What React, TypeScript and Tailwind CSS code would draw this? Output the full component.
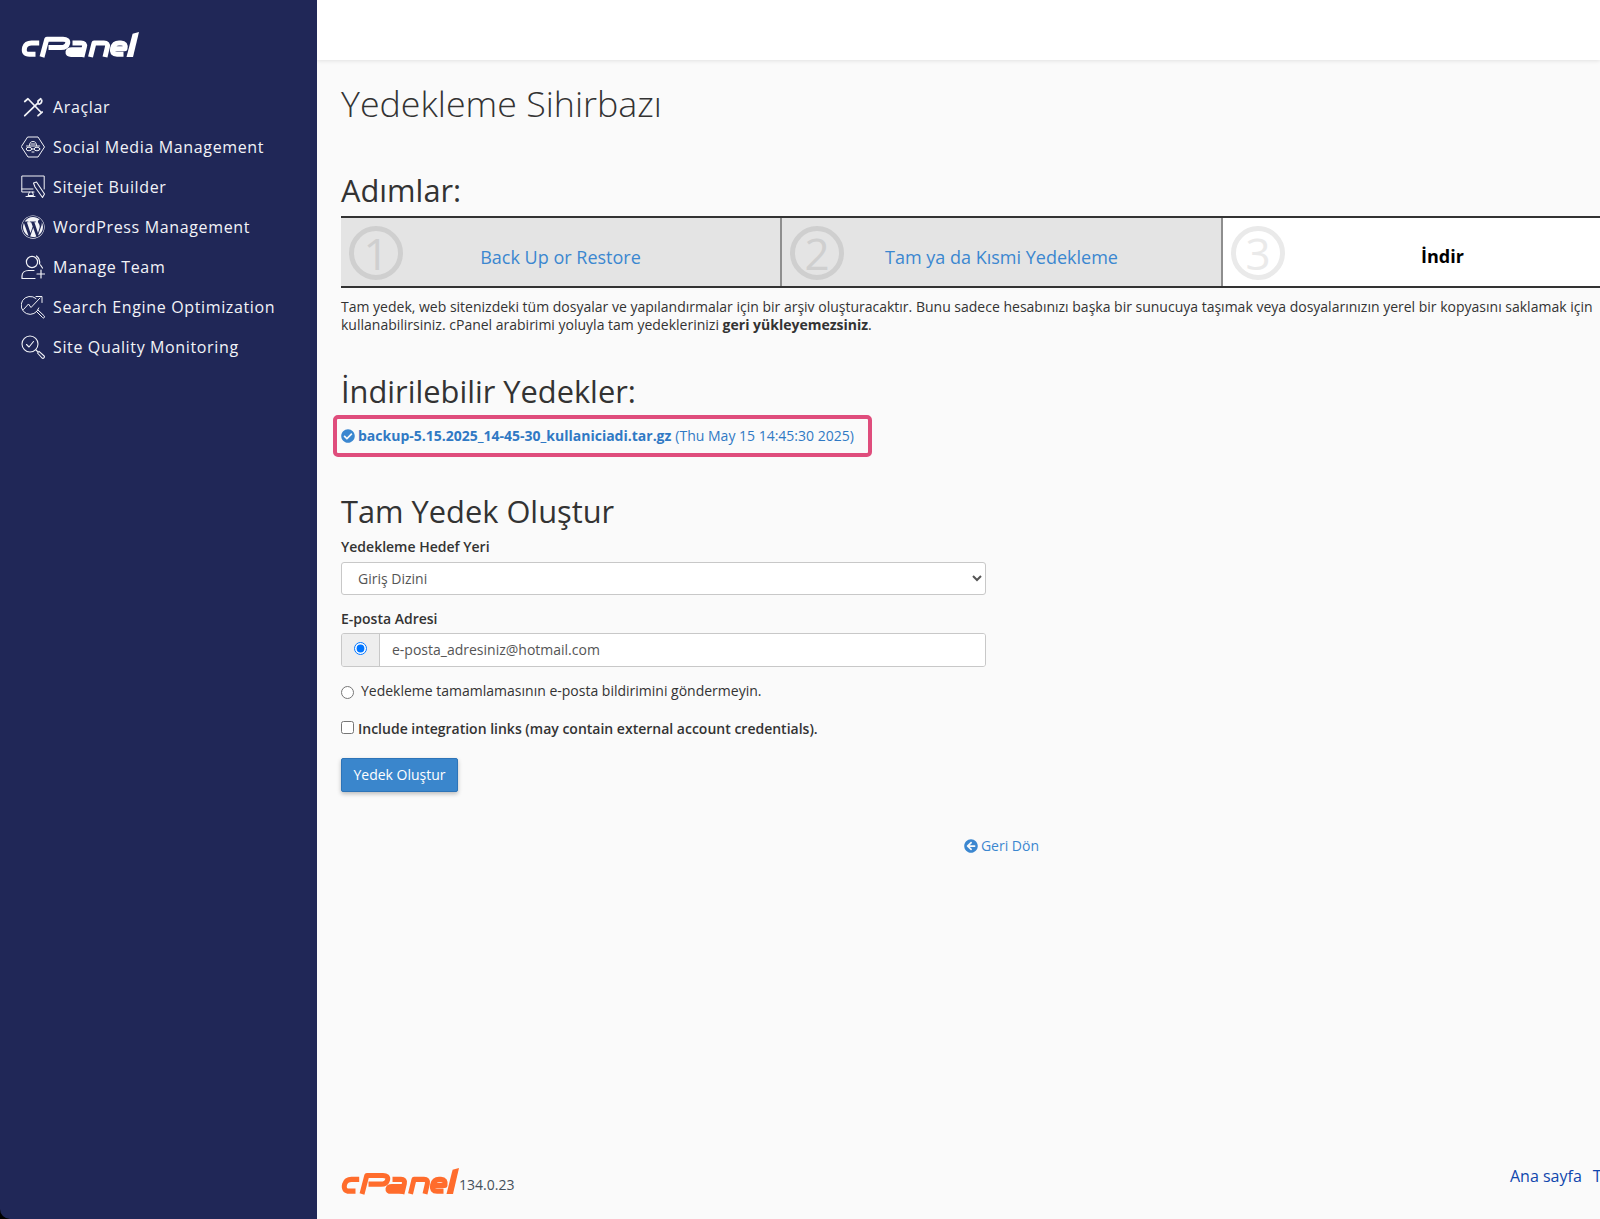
import React from "react";
import { FaWordpress, FaArrowCircleLeft, FaCheckCircle } from "react-icons/fa";

function Logo({ color, h = 26 }: { color: string; h?: number }) {
  return (
    <svg viewBox="0 0 118 26" width="118" height={h} preserveAspectRatio="none" fill="none" stroke={color} strokeWidth="5" strokeLinecap="butt" strokeLinejoin="round" role="img" aria-label="cPanel">
      <path d="M18.2 11H10.5Q5 11 3.6 15.6Q2 22.3 8.4 22.3H14.5" />
      <path d="M21 25L25.8 7.2H42Q47.6 7.2 46.6 11.4Q45.6 15.6 40 15.6H27.5" />
      <path d="M51.5 11H60Q64.4 11 63.4 14.8L60.9 25" />
      <path d="M61.8 17.8H51Q47.5 17.8 47 20Q46.6 22.4 50 22.4H61" />
      <path d="M69.5 25L73 11H83Q87.4 11 86.4 15L84 25" />
      <path d="M92.5 16.8H104Q105.2 11 100 11H98Q92.8 11 91.6 16.4Q90.2 22.3 96 22.3H102.5" />
      <path d="M105.5 25H112L118 0L111.6 1.8Z" fill={color} stroke="none" />
    </svg>
  );
}

const sw = { fill: "none", stroke: "currentColor", strokeWidth: 1.3, strokeLinecap: "round" as const, strokeLinejoin: "round" as const };

const ToolsIcon = () => (
  <svg viewBox="0 0 24 24" width="22" height="22" {...sw} strokeWidth={1.9}>
    <path d="M3 6L6.5 3L21 18M17.5 21.5L22 17.5" />
    <path d="M20.5 3L17.5 5.5V7.5L3 21.5" />
    <path d="M21.5 4.5C22 7 20 9.5 17.5 8.5" />
  </svg>
);
const HexIcon = () => (
  <svg viewBox="0 0 24 24" width="24" height="24" {...sw} strokeWidth={1}>
    <path d="M7 2H17L23.5 12L17 22H7L0.5 12Z" />
    <path d="M8.5 10.5C8.5 7.5 10 6.5 12 6.5C14 6.5 15.5 7.5 15.5 10.5M5.5 11H18.5" />
    <ellipse cx="8" cy="14" rx="2.8" ry="1.8" />
    <ellipse cx="16" cy="14" rx="2.8" ry="1.8" />
    <path d="M10.8 14H13.2M10 9H14M11 17H13" />
  </svg>
);
const MonitorIcon = () => (
  <svg viewBox="0 0 24 24" width="24" height="24" {...sw} strokeWidth={1}>
    <path d="M13 17H0.8V1H23.2V14" />
    <path d="M0.8 14H12" />
    <path d="M8.5 17L7 20.5H12.5L11.5 17M5 21.5H14" />
    <path d="M12.5 8L15.5 7L23.5 19L21.5 22.5L14 12Z" strokeWidth={1.1} />
  </svg>
);
const TeamIcon = () => (
  <svg viewBox="0 0 24 24" width="24" height="24" {...sw} strokeWidth={1.2}>
    <circle cx="11" cy="7" r="5.6" />
    <path d="M15.5 1C18 3 19 6 18.5 9M19.5 10L21.5 13" />
    <path d="M1 23.5H14M1 23.5V21C1 17.5 4 15.5 7.5 15.5H13" />
    <path d="M20 15V23M16 19H24" />
  </svg>
);
const SeoIcon = () => (
  <svg viewBox="0 0 24 24" width="24" height="24" {...sw} strokeWidth={1}>
    <path d="M15 3.5A9 9 0 1 0 17.8 13" />
    <path d="M2.5 14.5L7.5 9L10 12.5L19 3M15 1.5H21V7.5" />
    <path d="M15.5 16.5L21.5 22.5C22.5 23.8 24 22.5 23.3 21L17 15" />
  </svg>
);
const QualityIcon = () => (
  <svg viewBox="0 0 24 24" width="24" height="24" {...sw} strokeWidth={1.1}>
    <circle cx="9" cy="9" r="8" />
    <path d="M5.5 9.5L8 12L12.5 6.5" />
    <path d="M15 15L16.5 16.5" />
    <path d="M16.5 18L18 16.3L23.2 21C24 22.2 22.4 24 21 23Z" />
  </svg>
);

const nav: [React.ReactNode, string][] = [
  [<ToolsIcon />, "Araçlar"],
  [<HexIcon />, "Social Media Management"],
  [<MonitorIcon />, "Sitejet Builder"],
  [<FaWordpress size={24} />, "WordPress Management"],
  [<TeamIcon />, "Manage Team"],
  [<SeoIcon />, "Search Engine Optimization"],
  [<QualityIcon />, "Site Quality Monitoring"],
];

function Step({ n, title, active, last }: { n: string; title: string; active?: boolean; last?: boolean }) {
  return (
    <div className={`relative flex-1 flex items-center justify-center ${active ? "bg-white" : "bg-[#e4e4e4]"} ${last ? "" : "border-r-2 border-[#8e8e8e]"}`}>
      <div className={`absolute left-[8px] top-[8px] w-[54px] h-[54px] rounded-full border-[5px] flex items-center justify-center text-[44px] leading-none ${active ? "border-[#eaeaea] text-[#eaeaea]" : "border-[#cfcfcf] text-[#cfcfcf]"}`}>
        {n}
      </div>
      {active ? (
        <span className="text-[18px] font-bold text-black mt-[8px]">{title}</span>
      ) : (
        <a className="text-[18px] text-[#3b87d0] mt-[10px]">{title}</a>
      )}
    </div>
  );
}

export default function App() {
  return (
    <div className="flex h-[1219px] w-[1600px] overflow-hidden bg-black text-[#333] text-[14px] leading-[18px] font-['Open_Sans','Noto_Sans',sans-serif]">
      <aside className="w-[317px] shrink-0 bg-[#202757] text-[#f2f3f7] flex flex-col rounded-bl-[10px]">
        <div className="pl-[21px] pt-[32px] h-[87px]">
          <Logo color="#ffffff" />
        </div>
        {nav.map(([icon, label]) => (
          <div key={label} className="flex items-center h-10 pl-[21px] gap-[8px]">
            <span className="w-6 h-6 flex items-center justify-center shrink-0">{icon}</span>
            <span className="text-[16px] tracking-[0.64px] leading-none">{label}</span>
          </div>
        ))}
      </aside>

      <main className="flex-1 min-w-0 flex flex-col overflow-hidden bg-[#fafafa]">
        <div className="h-[60px] shrink-0 bg-white shadow-[0_1px_4px_rgba(0,0,0,0.1)]" />
        <div className="w-[1321px] ml-[24px] flex-1 flex flex-col">
          <h1 className="text-[35.8px] font-light leading-[44px] mt-[21px] text-[#333]">Yedekleme Sihirbazı</h1>
          <h2 className="text-[30.8px] leading-[40px] mt-[45px] mb-[6px] text-[#333]">Adımlar:</h2>

          <div className="flex h-[72px] border-y-2 border-[#333]">
            <Step n="1" title="Back Up or Restore" />
            <Step n="2" title="Tam ya da Kısmi Yedekleme" />
            <Step n="3" title="İndir" active last />
          </div>

          <p className="mt-[10px] leading-[18.4px] text-[#333]">
            Tam yedek, web sitenizdeki tüm dosyalar ve yapılandırmalar için bir arşiv oluşturacaktır. Bunu sadece hesabınızı başka bir sunucuya taşımak veya dosyalarınızın yerel bir kopyasını saklamak için kullanabilirsiniz. cPanel arabirimi yoluyla tam yedeklerinizi <b>geri yükleyemezsiniz</b>.
          </p>

          <h2 className="text-[30.8px] leading-[40px] mt-[36px] text-[#333]">İndirilebilir Yedekler:</h2>
          <div className="relative mt-[16px] h-[18px] flex items-center">
            <div className="absolute left-[-8px] top-[-12px] w-[539px] h-[42px] border-[4px] border-[#df4d7c] rounded-[5px]" />
            <FaCheckCircle size={14} className="text-[#3b87d0] mr-[3px]" />
            <a className="font-bold text-[#3079c4]">backup-5.15.2025_14-45-30_kullaniciadi.tar.gz</a>
            <span className="ml-[4px] text-[#3079c4]">(Thu May 15 14:45:30 2025)</span>
          </div>

          <h2 className="text-[30.8px] leading-[40px] mt-[46px] text-[#333]">Tam Yedek Oluştur</h2>
          <label className="block mt-[6px] font-semibold text-[14px] leading-[20px]">Yedekleme Hedef Yeri</label>
          <select className="block mt-[5px] w-[645px] h-[33px] rounded-[3px] border border-[#c8c8c8] bg-white pl-[12px] text-[14px] text-[#555]">
            <option>Giriş Dizini</option>
          </select>

          <label className="block mt-[14px] font-semibold text-[14px] leading-[20px]">E-posta Adresi</label>
          <div className="flex mt-[4px] w-[645px] h-[34px] rounded-[3px] border border-[#c8c8c8] overflow-hidden">
            <div className="w-[38px] bg-[#eeeeee] border-r border-[#c8c8c8] flex items-center justify-center">
              <input type="radio" name="em" defaultChecked className="m-0 mb-[3px]" />
            </div>
            <div className="flex-1 bg-white flex items-center pl-[12px] text-[14px] text-[#555]">e-posta_adresiniz@hotmail.com</div>
          </div>

          <label className="flex items-center mt-[15px] h-[18px]">
            <input type="radio" name="em" className="m-0 mr-[7px] mt-[3px]" />
            Yedekleme tamamlamasının e-posta bildirimini göndermeyin.
          </label>
          <label className="flex items-center mt-[20px] h-[18px] font-semibold">
            <input type="checkbox" className="m-0 mr-[4px] mb-[2px]" />
            Include integration links (may contain external account credentials).
          </label>

          <button className="mt-[20px] w-[117px] h-[34px] bg-[#3a86cc] border border-[#2d74b8] rounded-[2px] text-white text-[14px] shadow-[0_2px_4px_rgba(0,0,0,0.25)]">Yedek Oluştur</button>

          <div className="mt-[45px] flex items-center justify-center text-[14px] text-[#3b87d0] gap-[3px]">
            <FaArrowCircleLeft size={14} />
            <a>Geri Dön</a>
          </div>

          <footer className="mt-auto mb-[24px] flex items-end justify-between">
            <div className="flex items-end">
              <Logo color="#ff6c2c" h={27} />
              <span className="text-[14px] text-[#44505c] mb-[1px] leading-[18px]">134.0.23</span>
            </div>
            <div className="flex gap-[11px] text-[16px] text-[#0f46ad] w-[152px] mb-[10px] whitespace-nowrap">
              <a>Ana sayfa</a>
              <a>T</a>
            </div>
          </footer>
        </div>
      </main>
    </div>
  );
}
